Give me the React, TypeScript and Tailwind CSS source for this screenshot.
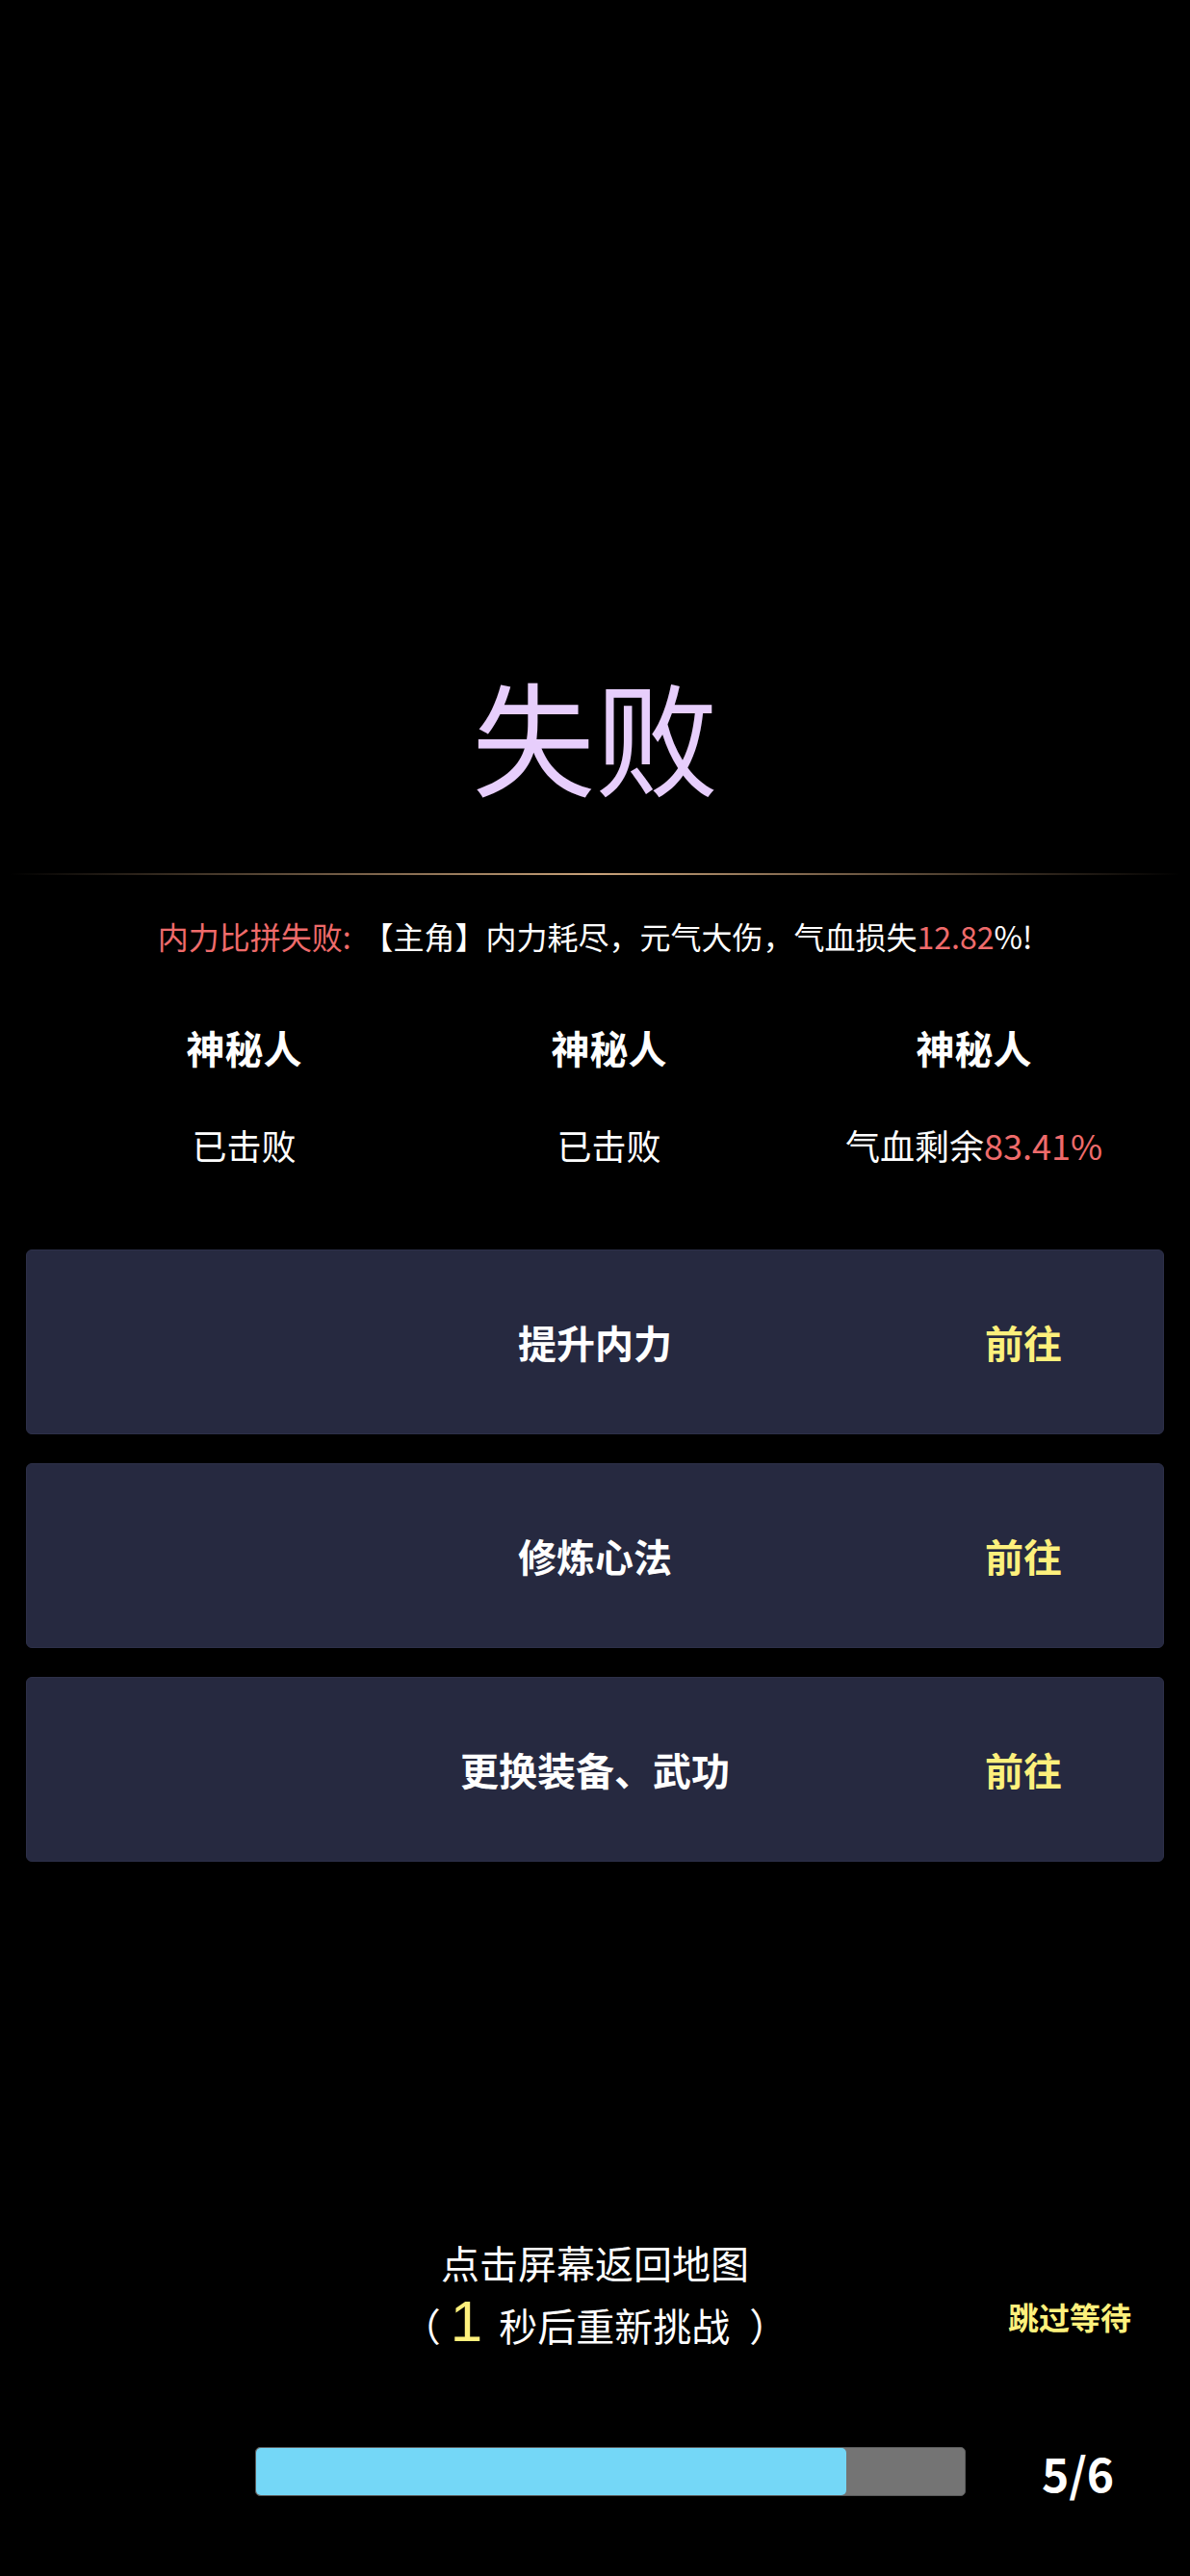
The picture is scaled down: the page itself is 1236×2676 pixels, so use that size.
import React from "react";

const cards = ["提升内力", "修炼心法", "更换装备、武功"];

export default function App() {
  return (
    <div
      className="w-[1236px] h-[2676px] bg-black text-white flex flex-col pt-[699px] overflow-hidden"
      style={{ fontFamily: '"Noto Sans CJK SC", "Noto Sans", sans-serif' }}
    >
      <div className="h-[128px] flex items-center justify-center text-[128px] leading-none text-[#e7cefc]">
        失败
      </div>
      <div className="mt-[80px] h-[2px] mx-[10px] bg-gradient-to-r from-transparent via-[#c9a27a] to-transparent" />
      <div className="mt-[43px] h-[40px] flex items-center justify-center text-[32px] leading-none whitespace-pre">
        <span className="text-[#ef6b6b]">内力比拼失败:</span>
        <span className="ml-[12px]">【主角】内力耗尽，元气大伤，气血损失</span>
        <span className="text-[#ef6b6b]">12.82</span>
        <span>%!</span>
      </div>
      <div className="mt-[71px] h-[50px] grid grid-cols-[repeat(3,379px)] pl-[64px] items-center text-[40px] font-bold leading-none">
        <div className="text-center">神秘人</div>
        <div className="text-center">神秘人</div>
        <div className="text-center">神秘人</div>
      </div>
      <div className="mt-[51px] h-[50px] grid grid-cols-[repeat(3,379px)] pl-[64px] items-center text-[36px] leading-none">
        <div className="text-center">已击败</div>
        <div className="text-center">已击败</div>
        <div className="text-center">
          气血剩余<span className="text-[#ef6b6b]">83.41%</span>
        </div>
      </div>
      <div className="mt-[84px] mx-[27px] flex flex-col gap-[30px]">
        {cards.map((c) => (
          <div
            key={c}
            className="relative h-[192px] rounded-[6px] bg-[#262940] border border-[#2d3049] flex items-center justify-center"
          >
            <span className="text-[40px] font-bold leading-none">{c}</span>
            <span className="absolute right-[105px] top-1/2 -translate-y-1/2 text-[40px] font-bold leading-none text-[#fdf07c]">
              前往
            </span>
          </div>
        ))}
      </div>
      <div className="mt-[391px] grid grid-cols-[1fr_auto_1fr]">
        <div />
        <div className="flex flex-col items-center">
          <div className="h-[50px] flex items-center text-[40px] leading-none">点击屏幕返回地图</div>
          <div className="mt-[17px] h-[60px] flex items-baseline text-[40px] leading-none whitespace-pre">
            <span>（</span>
            <span
              className="text-[60px] leading-[40px] text-[#fdf07c] ml-[10px] mr-[17px]"
              style={{ fontFamily: '"Liberation Sans", Arial, sans-serif' }}
            >
              1
            </span>
            <span>秒后重新挑战</span>
            <span className="ml-[20px]">）</span>
          </div>
        </div>
        <div className="flex justify-end items-center pr-[61px] pt-[34px]">
          <span className="text-[32px] font-bold leading-none text-[#fdf07c]">跳过等待</span>
        </div>
      </div>
      <div className="mt-[90px] flex items-center">
        <div className="ml-[265px] w-[738px] h-[51px] rounded-[5px] bg-[#747474] border border-[#5a5a5a] overflow-hidden">
          <div className="h-full rounded-[5px] bg-[#74d7f7]" style={{ width: `${(5 / 6) * 100}%` }} />
        </div>
        <div className="flex-1 text-center text-[48px] font-bold leading-none">5/6</div>
      </div>
    </div>
  );
}
